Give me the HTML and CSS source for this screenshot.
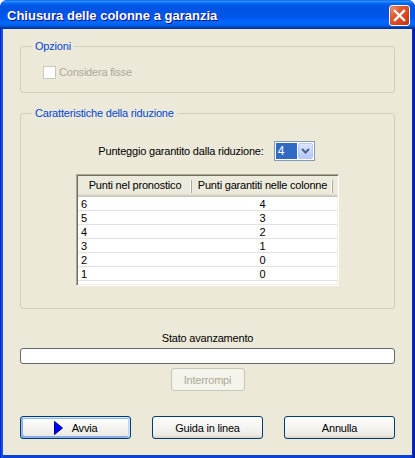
FILE: index.html
```html
<!DOCTYPE html>
<html lang="it">
<head>
<meta charset="utf-8">
<title>Chiusura delle colonne a garanzia</title>
<link rel="stylesheet" href="styles.css">
</head>
<body>
<div class="window">
  <div class="titlebar">
    <span class="title">Chiusura delle colonne a garanzia</span>
    <span class="close">
      <svg width="13" height="13" viewBox="0 0 13 13"><path d="M2 2 L11 11 M11 2 L2 11" stroke="#fff" stroke-width="2.4" stroke-linecap="square"/></svg>
    </span>
  </div>
  <div class="client">
    <fieldset class="group g1">
      <legend>Opzioni</legend>
      <div class="g1-body">
        <label class="check disabled"><span class="box"></span>Considera fisse</label>
      </div>
    </fieldset>
    <fieldset class="group g2">
      <legend>Caratteristiche della riduzione</legend>
      <div class="combo-row">
        <span>Punteggio garantito dalla riduzione:</span>
        <div class="combo">
          <span class="val">4</span>
          <span class="drop"><svg width="9" height="6" viewBox="0 0 9 6"><path d="M1 1 L4.5 4.5 L8 1" fill="none" stroke="#4D6185" stroke-width="2"/></svg></span>
        </div>
      </div>
      <div class="list">
        <div class="head">
          <div class="hc c1">Punti nel pronostico</div>
          <div class="hc c2">Punti garantiti nelle colonne</div>
          <div class="hc c3"></div>
        </div>
        <div class="row"><div class="c1">6</div><div class="c2">4</div></div>
        <div class="row"><div class="c1">5</div><div class="c2">3</div></div>
        <div class="row"><div class="c1">4</div><div class="c2">2</div></div>
        <div class="row"><div class="c1">3</div><div class="c2">1</div></div>
        <div class="row"><div class="c1">2</div><div class="c2">0</div></div>
        <div class="row"><div class="c1">1</div><div class="c2">0</div></div>
      </div>
    </fieldset>
    <div class="status">Stato avanzamento</div>
    <div class="progress"></div>
    <div class="center"><span class="btn disabled">Interrompi</span></div>
    <div class="buttons">
      <span class="btn default"><svg class="play" width="9" height="14" viewBox="0 0 9 14"><path d="M0.5 0.5 L8.5 7 L0.5 13.5 Z" fill="#0000FF" stroke="#00008B" stroke-width="1"/></svg>Avvia</span>
      <span class="btn">Guida in linea</span>
      <span class="btn">Annulla</span>
    </div>
  </div>
</div>
</body>
</html>
```
FILE: styles.css
```css
* { box-sizing: border-box; }
html, body { margin: 0; padding: 0; background: #fff; }
body {
  font-family: "Liberation Sans", Arial, sans-serif;
  font-size: 11px;
  letter-spacing: -0.2px;
  color: #000;
}
.window {
  width: 415px;
  height: 458px;
  display: flex;
  flex-direction: column;
  background: linear-gradient(to right, #0019CF 0, #0831D9 1px, #166AEE 2px, #0842D8 3px, #0842D8 411px, #0831D9 412px, #001EA0 414px);
  border-radius: 7px 7px 0 0;
  overflow: hidden;
}
.titlebar {
  height: 29px;
  flex: none;
  display: flex;
  align-items: center;
  justify-content: space-between;
  padding: 0 5px 0 7px;
  background: linear-gradient(to bottom, #0058EE 0%, #3593FF 4%, #288EFF 6%, #127DFF 8%, #036FFC 10%, #0262EE 14%, #0057E5 20%, #0054E3 24%, #0055EB 56%, #005BF5 66%, #026AFE 76%, #0062EF 86%, #0052D6 92%, #0040AB 94%, #003092 100%);
  border-radius: 7px 7px 0 0;
}
.title {
  color: #fff;
  font-weight: bold;
  font-size: 13px;
  letter-spacing: 0;
  text-shadow: 1px 1px #0F1089;
  padding-top: 1px;
}
.close {
  width: 21px;
  height: 21px;
  border: 1px solid #fff;
  border-radius: 3px;
  background: linear-gradient(135deg, #F2A087 0%, #E35C33 35%, #D8431D 70%, #C13A12 100%);
  box-shadow: inset 0 0 2px #A33A13;
  display: flex;
  align-items: center;
  justify-content: center;
  margin-top: 1px;
}
.client {
  flex: 1;
  margin: 0 3px 3px 3px;
  background: #ECE9D8;
  padding: 11px 17px 0 17px;
  display: flex;
  flex-direction: column;
}
.group {
  margin: 0;
  border: 1px solid #D0D0BF;
  border-radius: 3px;
  padding: 0;
  min-width: 0;
}
.group legend {
  color: #0046D5;
  padding: 0 3px 0 3px;
  margin-left: 11px;
  line-height: 13px;
}
.g1-body { padding: 13px 0 13px 22px; }
.g2 { margin-top: 14px; padding: 21px 0 22px 0; }
.check {
  display: flex;
  align-items: center;
  height: 13px;
  line-height: 13px;
}
.check.disabled { color: #ACA899; }
.check .box {
  width: 13px;
  height: 13px;
  border: 1px solid #CAC8BB;
  background: #fff;
  margin-right: 3px;
}
.combo-row {
  display: flex;
  align-items: center;
  justify-content: center;
  gap: 10px;
  height: 20px;
  padding-right: 2px;
}
.combo {
  width: 41px;
  height: 20px;
  border: 1px solid #7F9DB9;
  background: #fff;
  display: flex;
  padding: 1px;
}
.combo .val {
  flex: 1;
  background: #316AC5;
  color: #fff;
  padding-left: 2px;
  line-height: 16px;
  font-size: 12px;
}
.combo .drop {
  width: 15px;
  margin-left: 1px;
  border: 1px solid #BAC9F3;
  border-radius: 2px;
  background: linear-gradient(to bottom, #DCE6FC, #C2D3FA 60%, #B5C9F7);
  display: flex;
  align-items: center;
  justify-content: center;
}
.list {
  margin: 13px auto 0 auto;
  width: 263px;
  height: 112px;
  background: #fff;
  border: 1px solid #ACA899;
  border-color: #ACA899 #fff #fff #ACA899;
  box-shadow: inset 1px 1px #716F64, inset -1px -1px #F1EFE2;
  padding: 1px;
}
.head {
  display: flex;
  height: 21px;
  background: #EBEADB;
  box-shadow: inset 0 -1px #CBC7B8, inset 0 -2px #D6D2C2, inset 0 -3px #E2DECD;
}
.hc {
  line-height: 19px;
  text-align: center;
}
.hc.c1, .hc.c2 {
  background: linear-gradient(#ACA899, #ACA899) right 4px / 1px 13px no-repeat,
              linear-gradient(#fff, #fff) calc(100% - 1px) 4px / 1px 13px no-repeat;
}
.hc.c1 { width: 114px; }
.hc.c2 { width: 141px; }
.hc.c3 { flex: 1; }
.row {
  display: flex;
  height: 14px;
  line-height: 14px;
  border-bottom: 1px solid #E2E2E2;
}
.row .c1 { width: 114px; padding-left: 3px; }
.row .c2 { width: 141px; text-align: center; }
.status {
  margin-top: 23px;
  text-align: center;
  line-height: 13px;
}
.progress {
  margin-top: 3px;
  height: 16px;
  border: 1px solid #686868;
  border-radius: 3px;
  background: #fff;
}
.center {
  display: flex;
  justify-content: center;
  margin-top: 4px;
}
.btn {
  display: flex;
  align-items: center;
  justify-content: center;
  height: 23px;
  border: 1px solid #003C74;
  border-radius: 3px;
  background: linear-gradient(180deg, #fff 0%, #ECEBE6 86%, #D6D0C5 100%);
}
.btn.disabled {
  width: 74px;
  border-color: #C9C7BA;
  background: #F5F4EA;
  color: #ACA899;
}
.buttons {
  margin-top: 25px;
  display: flex;
  justify-content: space-between;
}
.buttons .btn { width: 111px; }
.btn.default {
  box-shadow: inset -1px 1px #CEE7FF, inset 1px 2px #98B8EA, inset -2px 0 #BCD4F6, inset 1px -1px #89ADE4, inset 2px -2px #89ADE4;
}
.play { margin-right: 9px; }
```
